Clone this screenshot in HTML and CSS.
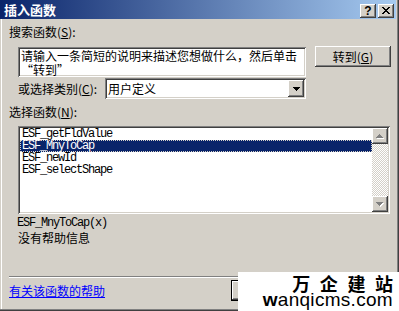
FILE: index.html
```html
<!DOCTYPE html>
<html lang="zh-CN">
<head>
<meta charset="utf-8">
<title>插入函数</title>
<link rel="stylesheet" href="styles.css">
</head>
<body>
<div class="window">
  <div class="titlebar">
    <span class="title">插入函数</span>
    <div class="tb-btns">
      <span class="tbtn help">?</span>
      <span class="tbtn close"><svg width="8" height="7" viewBox="0 0 8 7" shape-rendering="crispEdges"><path d="M0 0h2v1h-2zM6 0h2v1h-2zM1 1h2v1h-2zM5 1h2v1h-2zM2 2h4v1h-4zM3 3h2v1h-2zM2 4h4v1h-4zM1 5h2v1h-2zM5 5h2v1h-2zM0 6h2v1h-2zM6 6h2v1h-2z" fill="#000"/></svg></span>
    </div>
  </div>
  <div class="content">
    <div class="label">搜索函数(<u>S</u>):</div>
    <div class="search-row">
      <div class="field textarea">请输入一条简短的说明来描述您想做什么，然后单击<br>“转到”</div>
      <div class="btn go">转到(<u>G</u>)</div>
    </div>
    <div class="cat-row">
      <span class="cat-label">或选择类别(<u>C</u>):</span>
      <div class="field select">
        <span class="sel-text">用户定义</span>
        <span class="btn dd-btn"><svg width="7" height="4" viewBox="0 0 7 4" shape-rendering="crispEdges"><path d="M0 0h7v1h-7zM1 1h5v1h-5zM2 2h3v1h-3zM3 3h1v1h-1z" fill="#000"/></svg></span>
      </div>
    </div>
    <div class="label fn-label">选择函数(<u>N</u>):</div>
    <div class="field listbox">
      <div class="items">
        <div class="item">ESF_getFldValue</div>
        <div class="item selected">ESF_MnyToCap</div>
        <div class="item">ESF_newId</div>
        <div class="item">ESF_selectShape</div>
      </div>
      <div class="scrollbar">
        <span class="btn sb-btn"><svg width="8" height="5" viewBox="0 0 8 5" shape-rendering="crispEdges"><path d="M4 1h1v1h-1zM3 2h3v1h-3zM2 3h5v1h-5zM1 4h7v1h-7z" fill="#fff"/><path d="M3 0h1v1h-1zM2 1h3v1h-3zM1 2h5v1h-5zM0 3h7v1h-7z" fill="#808080"/></svg></span>
        <span class="track"></span>
        <span class="btn sb-btn"><svg width="8" height="5" viewBox="0 0 8 5" shape-rendering="crispEdges"><path d="M1 1h7v1h-7zM2 2h5v1h-5zM3 3h3v1h-3zM4 4h1v1h-1z" fill="#fff"/><path d="M0 0h7v1h-7zM1 1h5v1h-5zM2 2h3v1h-3zM3 3h1v1h-1z" fill="#808080"/></svg></span>
      </div>
    </div>
    <div class="sig">ESF_MnyToCap(x)</div>
    <div class="desc">没有帮助信息</div>
    <div class="sep"></div>
    <div class="footer">
      <a class="help-link" href="#">有关该函数的帮助</a>
      <div class="buttons">
        <div class="btn default"></div>
        <div class="btn"></div>
      </div>
    </div>
  </div>
  <div class="watermark">
    <span class="wm-cn">万 企 建 站</span>
    <span class="wm-en"><b>w</b>anqicms.com</span>
  </div>
</div>
</body>
</html>
```

FILE: styles.css
```css
* { box-sizing: border-box; }
html, body { margin: 0; padding: 0; }
body {
  width: 399px;
  height: 311px;
  overflow: hidden;
  background: #d4d0c8;
  font-family: "Noto Sans CJK SC", "Liberation Sans", sans-serif;
  font-size: 12px;
  line-height: 14px;
  color: #000;
}
u { text-decoration: underline; }

.window {
  position: relative;
  width: 399px;
  height: 311px;
  background: #d4d0c8;
  padding: 0 3px 3px 0;
  box-shadow: inset -1px -1px #404040, inset -2px -2px #808080, inset 1px 0 #d4d0c8, inset 2px 0 #fff;
  display: flex;
  flex-direction: column;
}

.titlebar {
  height: 19px;
  flex: none;
  display: flex;
  justify-content: space-between;
  align-items: flex-start;
  padding: 0 2px 0 4px;
  background: linear-gradient(to right, #0a246a, #a6caf0);
}
.title {
  color: #fff;
  font-weight: 700;
  font-size: 13px;
  line-height: 14px;
  margin-top: 3px;
}
.tb-btns { display: flex; gap: 2px; margin-top: 4px; }
.tbtn {
  width: 16px;
  height: 14px;
  background: #d4d0c8;
  box-shadow: inset -1px -1px #404040, inset 1px 1px #fff, inset -2px -2px #808080, inset 2px 2px #d4d0c8;
  display: flex;
  align-items: center;
  justify-content: center;
  font-family: "Liberation Sans", sans-serif;
  font-weight: 700;
  font-size: 12px;
  line-height: 12px;
  padding-bottom: 1px;
}

.content {
  flex: 1;
  display: flex;
  flex-direction: column;
  padding: 6px 0 0 9px;
}

.btn {
  background: #d4d0c8;
  box-shadow: inset -1px -1px #404040, inset 1px 1px #fff, inset -2px -2px #808080, inset 2px 2px #d4d0c8;
  display: flex;
  align-items: center;
  justify-content: center;
  flex: none;
}
.field {
  background: #fff;
  box-shadow: inset 1px 1px #808080, inset -1px -1px #fff, inset 2px 2px #404040, inset -2px -2px #d4d0c8;
  padding: 2px;
}

.search-row {
  display: flex;
  align-items: flex-start;
  margin-top: 7px;
  padding-left: 9px;
}
.textarea {
  width: 288px;
  height: 30px;
  margin-top: 1px;
  padding: 2px 3px;
  overflow: hidden;
  white-space: nowrap;
}
.go {
  width: 76px;
  height: 21px;
  margin-left: 9px;
}

.cat-row {
  display: flex;
  align-items: center;
  margin-top: 1px;
  padding-left: 9px;
}
.cat-label { width: 87px; flex: none; }
.select {
  width: 201px;
  height: 21px;
  display: flex;
  align-items: center;
  justify-content: space-between;
}
.sel-text { padding-left: 1px; }
.dd-btn { width: 16px; height: 17px; }

.label { line-height: 14px; }
.fn-label { margin-top: 6px; padding-left: 0; }

.listbox {
  width: 372px;
  height: 88px;
  margin: 7px 0 0 9px;
  display: flex;
}
.items { flex: 1; }
.item {
  height: 12px;
  line-height: 12px;
  padding-left: 2px;
  font-family: "Liberation Mono", monospace;
  font-size: 12px;
  letter-spacing: -1.2px;
}
.item.selected {
  background: #0a246a;
  color: #fff;
  outline: 1px dotted #d4d0c8;
  outline-offset: -1px;
}
.scrollbar {
  width: 16px;
  display: flex;
  flex-direction: column;
}
.sb-btn { width: 16px; height: 16px; }
.track {
  flex: 1;
  background-color: #fff;
  background-image: conic-gradient(#d4d0c8 25%, #fff 0 50%, #d4d0c8 0 75%, #fff 0);
  background-size: 2px 2px;
}

.sig {
  margin-top: 2px;
  padding-left: 8px;
  line-height: 15px;
  font-family: "Liberation Mono", monospace;
  letter-spacing: -1.2px;
}
.desc { padding-left: 9px; line-height: 14px; }

.sep {
  margin-top: 31px;
  height: 2px;
  border-top: 1px solid #808080;
  border-bottom: 1px solid #fff;
}

.footer {
  margin-top: 2px;
  display: flex;
  align-items: center;
  justify-content: space-between;
  padding-right: 5px;
}
.help-link { color: #0000ff; text-decoration: underline; }
.buttons { display: flex; gap: 8px; }
.buttons .btn { width: 76px; height: 21px; }
.buttons .default {
  box-shadow: inset 0 0 0 1px #000, inset -2px -2px #404040, inset 2px 2px #fff, inset -3px -3px #808080;
}

.watermark {
  position: absolute;
  right: 0;
  bottom: 0;
  width: 161px;
  height: 39px;
  background: #fff;
  display: flex;
  flex-direction: column;
  align-items: flex-end;
  padding-right: 6px;
}
.wm-cn {
  font-family: "Noto Sans CJK SC", sans-serif;
  font-weight: 700;
  font-size: 18px;
  line-height: 17px;
  word-spacing: 5.5px;
  margin-top: 3px;
}
.wm-en {
  font-family: "Liberation Sans", sans-serif;
  font-size: 19px;
  line-height: 16px;
  margin-top: 0;
  letter-spacing: 0.3px;
}
.wm-en b { font-weight: 700; }
```
